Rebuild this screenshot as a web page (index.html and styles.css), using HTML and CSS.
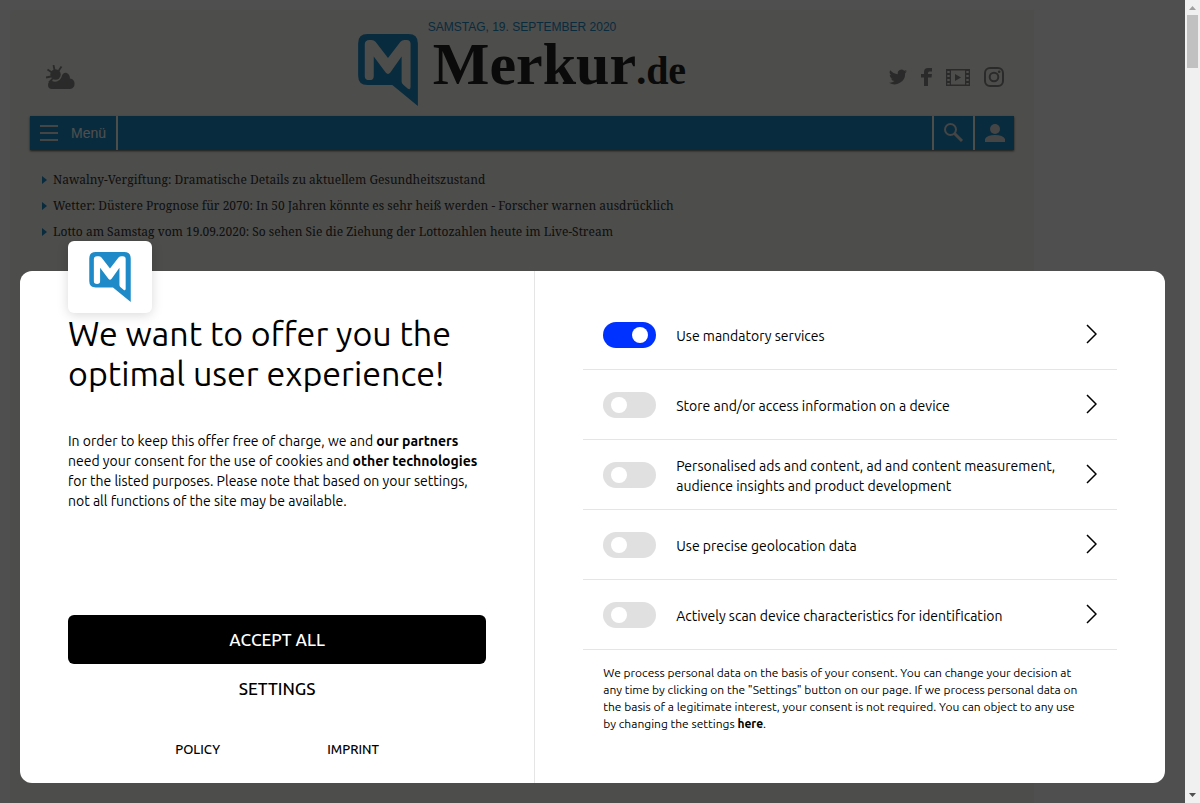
FILE: index.html
```
<!DOCTYPE html>
<html lang="de">
  <head>
    <meta charset="UTF-8">
    <meta name="viewport" content="width=device-width, initial-scale=1">
    <title>Merkur.de</title>
    <link rel="stylesheet" href="styles.css">
  </head>
  <body>
    <!-- shared shapes -->
    <svg class="defs" aria-hidden="true">
      <symbol id="mark" viewBox="0 0 180 217">
        <path fill-rule="evenodd" d="M28 0H152Q180 0 180 28V217L103 154H28Q0 154 0 126V28Q0 0 28 0Z M20 32V127Q20 139 34 139Q47 139 47 127V68L83 116Q90 125 97 116L131 68V143Q131 149 136 153L150 165Q158 169 158 160V30Q158 18 146 18H140Q132 18 127 24L90 72L53 24Q48 18 40 18H34Q20 18 20 32Z"/>
      </symbol>
      <symbol id="arrow" viewBox="0 0 11 20">
        <path d="M1 1L10 10L1 19" fill="none" stroke="#000" stroke-width="1.5"/>
      </symbol>
    </svg>

    <div class="window">
      <div class="page">
        <div class="site">
          <header class="header">
            <div class="date">SAMSTAG, 19. SEPTEMBER 2020</div>
            <div class="header-row">
              <a class="weather" href="#" aria-label="Wetter">
                <svg width="30" height="25" viewBox="0 0 30 25">
                  <circle cx="9.500" cy="9.500" r="5.200"/>
                  <path d="M7.500 0L8.500 5M15.500 1.500L12.500 6M1.500 4.500L6 7.500M0 12.500L5 11.500M3 17.500L6.500 14" fill="none" stroke="#888" stroke-width="1.800"/>
                  <path d="M6 24A4 4 0 0 1 6 16C11 18 15 15 16 10.500C18 5.500 24 8 24 13.500A5.300 5.300 0 0 1 24 24Z"/>
                </svg>
              </a>
              <a class="logo" href="#">
                <svg class="logo-mark" width="60" height="72"><use href="#mark"/></svg>
                <span class="logo-text">Merkur<small>.de</small></span>
              </a>
              <div class="social">
                <a href="#" aria-label="Twitter">
                  <svg width="18" height="16" viewBox="0 0 24 20"><path d="M24 2.400a10 10 0 0 1-2.800.8A5 5 0 0 0 23.300.500a10 10 0 0 1-3.100 1.200A4.900 4.900 0 0 0 11.800 6.200 14 14 0 0 1 1.700 1a4.900 4.900 0 0 0 1.500 6.600A5 5 0 0 1 1 7v.1a4.900 4.900 0 0 0 3.900 4.800 5 5 0 0 1-2.200.1 4.900 4.900 0 0 0 4.600 3.400A9.900 9.900 0 0 1 0 17.500 14 14 0 0 0 21.500 5a10 10 0 0 0 2.500-2.600Z"/></svg>
                </a>
                <a href="#" aria-label="Facebook">
                  <svg width="11" height="18" viewBox="0 0 11 18"><path d="M3 18V9.500H0V6H3V4Q3 0 7 0H11V3.500H8.500Q7 3.500 7 5V6H11L10.500 9.500H7V18Z"/></svg>
                </a>
                <a href="#" aria-label="Videos">
                  <svg width="24" height="17" viewBox="0 0 24 17"><path fill-rule="evenodd" d="M0 0H24V17H0ZM5 1.500V15.500H19V1.500ZM1.300 2V4H3.700V2ZM1.300 6V8H3.700V6ZM1.300 10V12H3.700V10ZM1.300 14V15.500H3.700V14ZM20.300 2V4H22.700V2ZM20.300 6V8H22.700V6ZM20.300 10V12H22.700V10ZM20.300 14V15.500H22.700V14Z"/><path d="M9 5L15 8.500L9 12Z"/></svg>
                </a>
                <a href="#" aria-label="Instagram">
                  <svg width="20" height="20" viewBox="0 0 20 20"><g fill="none" stroke="#888" stroke-width="2"><rect x="1" y="1" width="18" height="18" rx="5"/><circle cx="10" cy="10" r="4.300"/></g><circle cx="15.200" cy="4.800" r="1.300"/></svg>
                </a>
              </div>
            </div>
          </header>

          <nav class="nav">
            <button class="nav-menu" type="button">
              <svg width="18" height="16" viewBox="0 0 18 16"><path d="M0 1H18M0 8H18M0 15H18" stroke="#ddd" stroke-width="2"/></svg>
              Menü
            </button>
            <button class="nav-icon" type="button" aria-label="Suche">
              <svg width="20" height="20" viewBox="0 0 20 20"><g fill="none" stroke="#ddd"><circle cx="6.500" cy="6.500" r="5.500" stroke-width="2"/><path d="M10.500 10.500L18 18" stroke-width="3"/></g></svg>
            </button>
            <button class="nav-icon" type="button" aria-label="Anmelden">
              <svg width="20" height="20" viewBox="0 0 20 20"><g fill="#ddd"><circle cx="10" cy="6" r="5"/><path d="M0 19V16Q2 12 10 12Q18 12 20 16V19Z"/></g></svg>
            </button>
          </nav>

          <ul class="ticker">
            <li><a href="#">Nawalny-Vergiftung: Dramatische Details zu aktuellem Gesundheitszustand</a></li>
            <li><a href="#">Wetter: Düstere Prognose für 2070: In 50 Jahren könnte es sehr heiß werden - Forscher warnen ausdrücklich</a></li>
            <li><a href="#">Lotto am Samstag vom 19.09.2020: So sehen Sie die Ziehung der Lottozahlen heute im Live-Stream</a></li>
          </ul>
        </div>

        <div class="overlay">
          <div class="dialog" role="dialog" aria-labelledby="title" lang="en">
            <div class="badge">
              <svg width="42" height="50"><use href="#mark"/></svg>
            </div>
            <section class="intro">
              <h1 id="title">We want to offer you the optimal user experience!</h1>
              <p>In order to keep this offer free of charge, we and <a href="#">our partners</a> need your consent for the use of cookies and <a href="#">other technologies</a> for the listed purposes. Please note that based on your settings, not all functions of the site may be available.</p>
              <div class="actions">
                <button class="btn btn-accept" type="button">ACCEPT ALL</button>
                <button class="btn" type="button">SETTINGS</button>
              </div>
              <div class="links">
                <a href="#">POLICY</a>
                <a href="#">IMPRINT</a>
              </div>
            </section>
            <section class="purposes">
              <div class="purpose">
                <input type="checkbox" id="p1" checked>
                <label for="p1">Use mandatory services</label>
                <button type="button" aria-label="Details"><svg width="11" height="20"><use href="#arrow"/></svg></button>
              </div>
              <div class="purpose">
                <input type="checkbox" id="p2">
                <label for="p2">Store and/or access information on a device</label>
                <button type="button" aria-label="Details"><svg width="11" height="20"><use href="#arrow"/></svg></button>
              </div>
              <div class="purpose">
                <input type="checkbox" id="p3">
                <label for="p3">Personalised ads and content, ad and content measurement, audience insights and product development</label>
                <button type="button" aria-label="Details"><svg width="11" height="20"><use href="#arrow"/></svg></button>
              </div>
              <div class="purpose">
                <input type="checkbox" id="p4">
                <label for="p4">Use precise geolocation data</label>
                <button type="button" aria-label="Details"><svg width="11" height="20"><use href="#arrow"/></svg></button>
              </div>
              <div class="purpose">
                <input type="checkbox" id="p5">
                <label for="p5">Actively scan device characteristics for identification</label>
                <button type="button" aria-label="Details"><svg width="11" height="20"><use href="#arrow"/></svg></button>
              </div>
              <p class="note">We process personal data on the basis of your consent. You can change your decision at any time by clicking on the "Settings" button on our page. If we process personal data on the basis of a legitimate interest, your consent is not required. You can object to any use by changing the settings <a href="#">here</a>.</p>
            </section>
          </div>
        </div>
      </div>

      <div class="scrollbar" aria-hidden="true">
        <svg width="7" height="4" viewBox="0 0 7 4"><path d="M0 4L3.500 0L7 4Z" fill="#a0a0a0"/></svg>
        <div class="thumb"></div>
        <svg width="7" height="4" viewBox="0 0 7 4"><path d="M0 0L3.500 4L7 0Z" fill="#505050"/></svg>
      </div>
    </div>
  </body>
</html>
```
FILE: styles.css
```
* {
  box-sizing: border-box;
}
body {
  margin: 0;
  background: #fff;
}
a {
  color: inherit;
  text-decoration: none;
}
button {
  padding: 0;
  border: 0;
  background: none;
  color: inherit;
  font: inherit;
  cursor: pointer;
}
svg {
  display: block;
}
.defs {
  position: absolute;
  width: 0;
  height: 0;
}
.window {
  display: grid;
  grid-template-columns: 1fr 15px;
  height: 100vh;
}
.page {
  position: relative;
  padding: 10px 10px 0;
  overflow: hidden;
}

/* site behind the dialog */
.site {
  max-width: 1024px;
  min-height: 100%;
  padding: 10px 20px 0;
  background: #f8f7f0;
}
.date {
  color: #1e8bc8;
  font: 12px/14px "Liberation Sans", Arial, sans-serif;
  text-align: center;
}
.header-row {
  display: grid;
  grid-template-columns: 1fr auto 1fr;
  align-items: center;
  margin-bottom: 10px;
}
.weather,
.social {
  padding-top: 14px;
  fill: #888;
}
.weather {
  padding-left: 16px;
}
.logo {
  display: flex;
  gap: 15px;
}
.logo-mark,
.badge svg {
  fill: #1e8bc8;
}
.logo-text {
  color: #222;
  font: bold 60px/60px "Liberation Serif", "Times New Roman", serif;
}
.logo-text small {
  font-size: 40px;
}
.social {
  display: flex;
  align-items: center;
  justify-content: flex-end;
  gap: 14px;
  padding-right: 10px;
}
.nav {
  display: flex;
  height: 34px;
  background: #1e8bc8;
  box-shadow: 0 1px 2px #555;
  color: #fff;
}
.nav-menu {
  display: flex;
  align-items: center;
  gap: 13px;
  margin-right: auto;
  padding: 0 10px;
  border-right: 2px solid #f8f7f0;
  font: 14px "Liberation Sans", Arial, sans-serif;
}
.nav-icon {
  width: 41px;
  padding-left: 10px;
  border-left: 2px solid #f8f7f0;
}
.ticker {
  margin: 0;
  padding: 17px 12px 0;
  color: #333;
  font: 12px/26px "Noto Serif", "DejaVu Serif Condensed", "DejaVu Serif", serif;
  list-style: none;
}
.ticker li {
  display: flex;
  align-items: center;
  gap: 6px;
}
.ticker li::before {
  content: "";
  border: 4px solid transparent;
  border-left: 5px solid #1e8bc8;
  border-right: 0;
}

/* consent dialog */
.overlay {
  position: absolute;
  inset: 0;
  display: flex;
  align-items: flex-end;
  padding: 20px;
  background: rgba(0, 0, 0, 0.69);
}
.dialog {
  position: relative;
  display: grid;
  grid-template-columns: 45% 55%;
  width: 100%;
  min-height: 512px;
  border-radius: 12px;
  background: #fff;
  color: #000;
  font: 14px/20px "Ubuntu", "Noto Sans", sans-serif;
}
.dialog p {
  margin: 0;
}
.dialog p a {
  font-weight: bold;
}
.badge {
  position: absolute;
  top: -30px;
  left: 48px;
  display: flex;
  align-items: center;
  justify-content: center;
  width: 84px;
  height: 72px;
  border-radius: 6px;
  background: #fff;
  box-shadow: 0 2px 12px rgba(0, 0, 0, 0.15);
}
.intro {
  display: flex;
  flex-direction: column;
  padding: 42px 48px 24px;
  border-right: 1px solid #e5e5e5;
}
.intro h1 {
  margin: 0 0 38px;
  font-size: 34px;
  font-weight: normal;
  line-height: 40px;
}
.actions {
  display: grid;
  margin-top: auto;
}
.btn {
  height: 49px;
  border-radius: 6px;
  font-size: 17px;
  font-weight: 500;
}
.btn-accept {
  background: #000;
  color: #fff;
}
.links {
  display: flex;
  justify-content: space-evenly;
  margin-top: 26px;
  font-size: 13px;
  font-weight: 500;
}
.purposes {
  padding: 29px 48px 24px;
}
.purpose {
  display: grid;
  grid-template-columns: 53px 1fr 11px;
  align-items: center;
  column-gap: 20px;
  height: 70px;
  padding: 0 20px;
  border-bottom: 1px solid #e5e5e5;
}
.purpose label {
  padding-top: 2px;
}
.purpose button {
  padding-bottom: 2px;
}
.purpose input {
  display: flex;
  align-items: center;
  width: 53px;
  height: 26px;
  margin: 0;
  padding: 0 8px;
  border-radius: 13px;
  background: #e0e0e0;
  appearance: none;
}
.purpose input::before {
  content: "";
  width: 16px;
  height: 16px;
  border-radius: 50%;
  background: #fff;
}
.purpose input:checked {
  justify-content: flex-end;
  background: #0032ff;
}
.purposes .note {
  padding: 14px 32px 0 20px;
  font-size: 12px;
  line-height: 17px;
}

.scrollbar {
  display: flex;
  flex-direction: column;
  align-items: center;
  padding: 6px 2px;
  background: #f0f0f0;
}
.thumb {
  width: 100%;
  height: 53px;
  margin: 5px 0 auto;
  background: #c1c1c1;
}
```
